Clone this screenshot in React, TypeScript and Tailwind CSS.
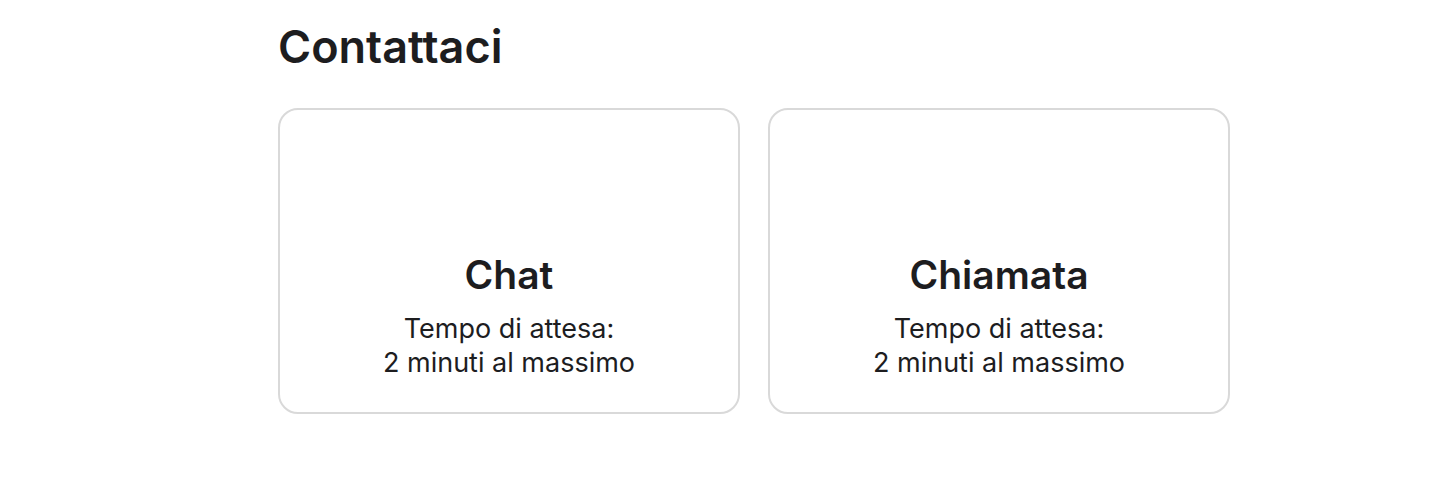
import React from 'react';

interface ContactOption {
  title: string;
  lines: string[];
}

const options: ContactOption[] = [
  { title: 'Chat', lines: ['Tempo di attesa:', '2 minuti al massimo'] },
  { title: 'Chiamata', lines: ['Tempo di attesa:', '2 minuti al massimo'] },
];

const ContactCard: React.FC<{ option: ContactOption }> = ({ option }) => (
  <div className="h-[306px] rounded-[20px] border-2 border-[#d9d9d9] bg-white flex flex-col items-center justify-end pb-[32px] text-center">
    <h3 className="text-[39px] leading-[46px] font-semibold text-[#1d1d1f]">{option.title}</h3>
    <p className="mt-[14px] text-[27px] leading-[34px] text-[#1d1d1f]">
      {option.lines.map(l => (
        <span key={l} className="block">
          {l}
        </span>
      ))}
    </p>
  </div>
);

export default function App() {
  return (
    <div className="w-[1440px] h-[482px] bg-white" style={{ fontFamily: 'Inter, "Noto Sans", sans-serif' }}>
      <div className="pl-[278px] pt-[20px] w-[1230px]">
        <h2 className="text-[45px] leading-[54px] font-semibold text-[#1d1d1f]">Contattaci</h2>
        <div className="mt-[34px] grid grid-cols-2 gap-[28px]">
          {options.map(o => (
            <ContactCard key={o.title} option={o} />
          ))}
        </div>
      </div>
    </div>
  );
}
